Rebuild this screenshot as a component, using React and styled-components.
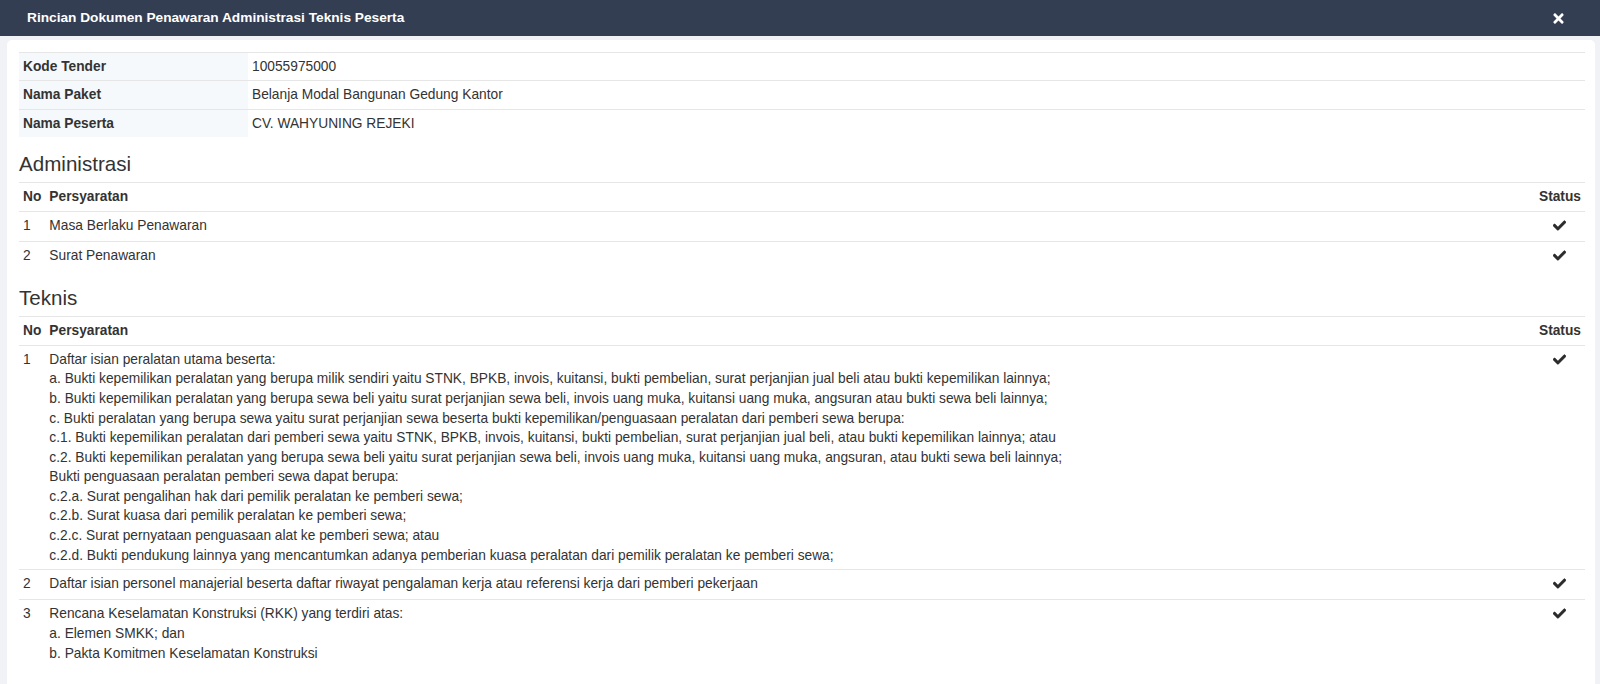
import React from "react";
import styled, { createGlobalStyle } from "styled-components";
import { FaCheck, FaTimes } from "react-icons/fa";

const GlobalStyle = createGlobalStyle`
html, body {
  margin: 0;
  padding: 0;
  height: 100%;
  overflow: hidden;
}
body {
  font-family: "Liberation Sans", Arial, sans-serif;
  font-size: 13.75px;
  line-height: 19.6px;
  color: #333;
  background: #f1f2f5;
}
#root {
  height: 100%;
}
`;

const Modal = styled.div`
display: flex;
flex-direction: column;
height: 100%;
`;

const ModalHeader = styled.div`
display: flex;
align-items: center;
justify-content: space-between;
height: 36px;
padding: 0 34px 0 27px;
background: #343e52;
color: #fff;
flex-shrink: 0;
`;

const ModalTitle = styled.h3`
margin: 0;
font-size: 13.7px;
font-weight: bold;
line-height: 20px;
`;

const CloseButton = styled.button`
display: flex;
align-items: center;
border: 0;
padding: 0;
background: transparent;
color: #fff;
cursor: pointer;
`;

const ModalBody = styled.div`
flex: 1;
display: flex;
padding: 4px 5px 0 7px;
`;

const Panel = styled.div`
flex: 1;
background: #fff;
border-radius: 5px 5px 0 0;
padding: 12px 10px 12px 12px;
`;

const Table = styled.table`
width: 100%;
border-collapse: collapse;
border-spacing: 0;
`;

const Cell = styled.td`
padding: 4px 4px 3.8px;
border-top: 1px solid #e6e6e6;
vertical-align: top;
text-align: ${(p) => (p.$center ? "center" : "left")};
width: ${(p) => p.$width || "auto"};
white-space: ${(p) => (p.$nowrap ? "nowrap" : "normal")};
`;

const HeadCell = styled(Cell).attrs({ as: "th" })`
font-weight: bold;
`;

const LabelCell = styled(Cell).attrs({ as: "th" })`
width: 221px;
font-weight: bold;
background: #f5f9fc;
`;

const SectionTitle = styled.h4`
margin: 15px 0 7px;
font-size: 20.6px;
font-weight: normal;
line-height: 23px;
color: #333;
`;

const Check = styled(FaCheck)`
display: inline-block;
width: 13px;
height: 13px;
margin-top: 3px;
color: #2b2b2b;
stroke: #2b2b2b;
stroke-width: 20px;
`;

const info = [
  ["Kode Tender", "10055975000"],
  ["Nama Paket", "Belanja Modal Bangunan Gedung Kantor"],
  ["Nama Peserta", "CV. WAHYUNING REJEKI"],
];

const administrasi = [
  ["Masa Berlaku Penawaran"],
  ["Surat Penawaran"],
];

const teknis = [
  [
    "Daftar isian peralatan utama beserta:",
    "a. Bukti kepemilikan peralatan yang berupa milik sendiri yaitu STNK, BPKB, invois, kuitansi, bukti pembelian, surat perjanjian jual beli atau bukti kepemilikan lainnya;",
    "b. Bukti kepemilikan peralatan yang berupa sewa beli yaitu surat perjanjian sewa beli, invois uang muka, kuitansi uang muka, angsuran atau bukti sewa beli lainnya;",
    "c. Bukti peralatan yang berupa sewa yaitu surat perjanjian sewa beserta bukti kepemilikan/penguasaan peralatan dari pemberi sewa berupa:",
    "c.1. Bukti kepemilikan peralatan dari pemberi sewa yaitu STNK, BPKB, invois, kuitansi, bukti pembelian, surat perjanjian jual beli, atau bukti kepemilikan lainnya; atau",
    "c.2. Bukti kepemilikan peralatan yang berupa sewa beli yaitu surat perjanjian sewa beli, invois uang muka, kuitansi uang muka, angsuran, atau bukti sewa beli lainnya;",
    "Bukti penguasaan peralatan pemberi sewa dapat berupa:",
    "c.2.a. Surat pengalihan hak dari pemilik peralatan ke pemberi sewa;",
    "c.2.b. Surat kuasa dari pemilik peralatan ke pemberi sewa;",
    "c.2.c. Surat pernyataan penguasaan alat ke pemberi sewa; atau",
    "c.2.d. Bukti pendukung lainnya yang mencantumkan adanya pemberian kuasa peralatan dari pemilik peralatan ke pemberi sewa;",
  ],
  ["Daftar isian personel manajerial beserta daftar riwayat pengalaman kerja atau referensi kerja dari pemberi pekerjaan"],
  [
    "Rencana Keselamatan Konstruksi (RKK) yang terdiri atas:",
    "a. Elemen SMKK; dan",
    "b. Pakta Komitmen Keselamatan Konstruksi",
  ],
];

function SyaratTable({ rows }) {
  return (
    <Table>
      <thead>
        <tr>
          <HeadCell $width="1%" $nowrap>No</HeadCell>
          <HeadCell>Persyaratan</HeadCell>
          <HeadCell $width="1%" $nowrap $center>Status</HeadCell>
        </tr>
      </thead>
      <tbody>
        {rows.map((lines, i) => (
          <tr key={i}>
            <Cell $nowrap>{i + 1}</Cell>
            <Cell>
              {lines.map((l, j) => (
                <React.Fragment key={j}>
                  {j > 0 && <br />}
                  {l}
                </React.Fragment>
              ))}
            </Cell>
            <Cell $center>
              <Check />
            </Cell>
          </tr>
        ))}
      </tbody>
    </Table>
  );
}

export default function App() {
  return (
    <>
      <GlobalStyle />
      <Modal>
        <ModalHeader>
          <ModalTitle>Rincian Dokumen Penawaran Administrasi Teknis Peserta</ModalTitle>
          <CloseButton aria-label="Tutup">
            <FaTimes size={15} />
          </CloseButton>
        </ModalHeader>
        <ModalBody>
          <Panel>
            <Table>
              <tbody>
                {info.map(([k, v]) => (
                  <tr key={k}>
                    <LabelCell>{k}</LabelCell>
                    <Cell>{v}</Cell>
                  </tr>
                ))}
              </tbody>
            </Table>

            <SectionTitle>Administrasi</SectionTitle>
            <SyaratTable rows={administrasi} />

            <SectionTitle>Teknis</SectionTitle>
            <SyaratTable rows={teknis} />
          </Panel>
        </ModalBody>
      </Modal>
    </>
  );
}
